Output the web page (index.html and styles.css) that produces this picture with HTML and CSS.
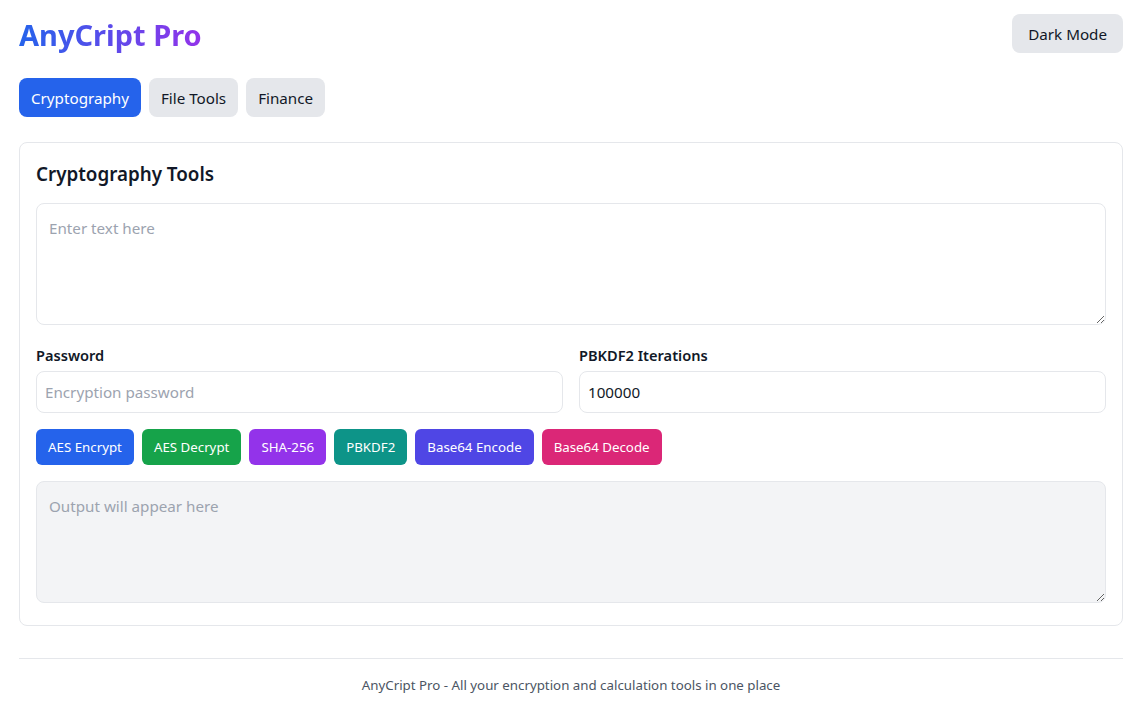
FILE: index.html
```html
<!DOCTYPE html>
<html lang="en">
<head>
<meta charset="utf-8">
<title>AnyCript Pro</title>
<link rel="stylesheet" href="styles.css">
</head>
<body>
<div class="page">
  <header class="header">
    <h1 class="logo">AnyCript Pro</h1>
    <button class="btn-gray mode">Dark Mode</button>
  </header>
  <nav class="tabs">
    <button class="tab active">Cryptography</button>
    <button class="tab">File Tools</button>
    <button class="tab">Finance</button>
  </nav>
  <section class="card">
    <h2 class="card-title">Cryptography Tools</h2>
    <textarea class="field area" placeholder="Enter text here"></textarea>
    <div class="grid">
      <div class="col">
        <label class="label">Password</label>
        <input class="field input" type="text" placeholder="Encryption password">
      </div>
      <div class="col">
        <label class="label">PBKDF2 Iterations</label>
        <input class="field input" type="text" value="100000">
      </div>
    </div>
    <div class="actions">
      <button class="act blue">AES Encrypt</button>
      <button class="act green">AES Decrypt</button>
      <button class="act purple">SHA-256</button>
      <button class="act teal">PBKDF2</button>
      <button class="act indigo">Base64 Encode</button>
      <button class="act pink">Base64 Decode</button>
    </div>
    <textarea class="field area output" placeholder="Output will appear here" readonly></textarea>
  </section>
  <footer class="footer">AnyCript Pro - All your encryption and calculation tools in one place</footer>
</div>
</body>
</html>
```
FILE: styles.css
```css
* { box-sizing: border-box; }
html, body { margin: 0; padding: 0; background: #ffffff; }
body {
  font-family: "Noto Sans", "Open Sans", sans-serif;
  color: #111827;
  font-size: 15.2px;
  line-height: 24px;
}
.page { padding: 14px 14px 0 19px; }
.header {
  display: flex;
  justify-content: space-between;
  align-items: center;
  margin-bottom: 25px;
}
.logo {
  margin: 0;
  padding-top: 3px;
  font-size: 29px;
  line-height: 36px;
  font-weight: 700;
  background: linear-gradient(90deg, #2563eb, #9333ea);
  -webkit-background-clip: text;
  background-clip: text;
  color: transparent;
  display: inline-block;
}
button { font-family: inherit; border: 0; cursor: pointer; }
.btn-gray, .tab {
  background: #e5e7eb;
  color: #111827;
  font-size: 15.2px;
  line-height: 23px;
  padding: 9px 16px 7px;
  border-radius: 8px;
}
.mode { height: 39px; }
.tabs { display: flex; gap: 8px; margin-bottom: 25px; }
.tab { height: 39px; padding: 9px 12px 7px; }
.tab.active { background: #2563eb; color: #ffffff; }
.card {
  border: 1px solid #e5e7eb;
  border-radius: 8px;
  padding: 16px 16px 22px;
  background: #fff;
}
.card-title {
  margin: 0 0 15px;
  padding-top: 2px;
  font-size: 18.8px;
  line-height: 27px;
  font-weight: 600;
  color: #111827;
}
.field {
  display: block;
  width: 100%;
  border: 1px solid #e5e7eb;
  border-radius: 8px;
  font-family: inherit;
  font-size: 15.2px;
  color: #111827;
  background: #fff;
  outline: none;
}
.field::placeholder { color: #9ca3af; }
.area { height: 122px; padding: 12px; line-height: 24px; resize: vertical; }
.grid {
  display: grid;
  grid-template-columns: 1fr 1fr;
  gap: 16px;
  margin-top: 16px;
}
.label {
  display: block;
  font-size: 14.6px;
  line-height: 24px;
  font-weight: 600;
  margin: -2px 0 4px;
  padding-top: 4px;
}
.input { height: 42px; padding: 8px; }
.actions { display: flex; flex-wrap: wrap; gap: 8px; margin: 16px 0; }
.act {
  height: 36px;
  padding: 0 12px;
  border-radius: 6px;
  color: #fff;
  font-size: 13.3px;
}
.blue { background: #2563eb; }
.green { background: #16a34a; }
.purple { background: #9333ea; }
.teal { background: #0d9488; }
.indigo { background: #4f46e5; }
.pink { background: #db2777; }
.output { background: #f3f4f6; }
.footer {
  margin-top: 32px;
  border-top: 1px solid #e5e7eb;
  padding: 16px 0;
  text-align: center;
  font-size: 13.3px;
  line-height: 20px;
  color: #4b5563;
}
```
